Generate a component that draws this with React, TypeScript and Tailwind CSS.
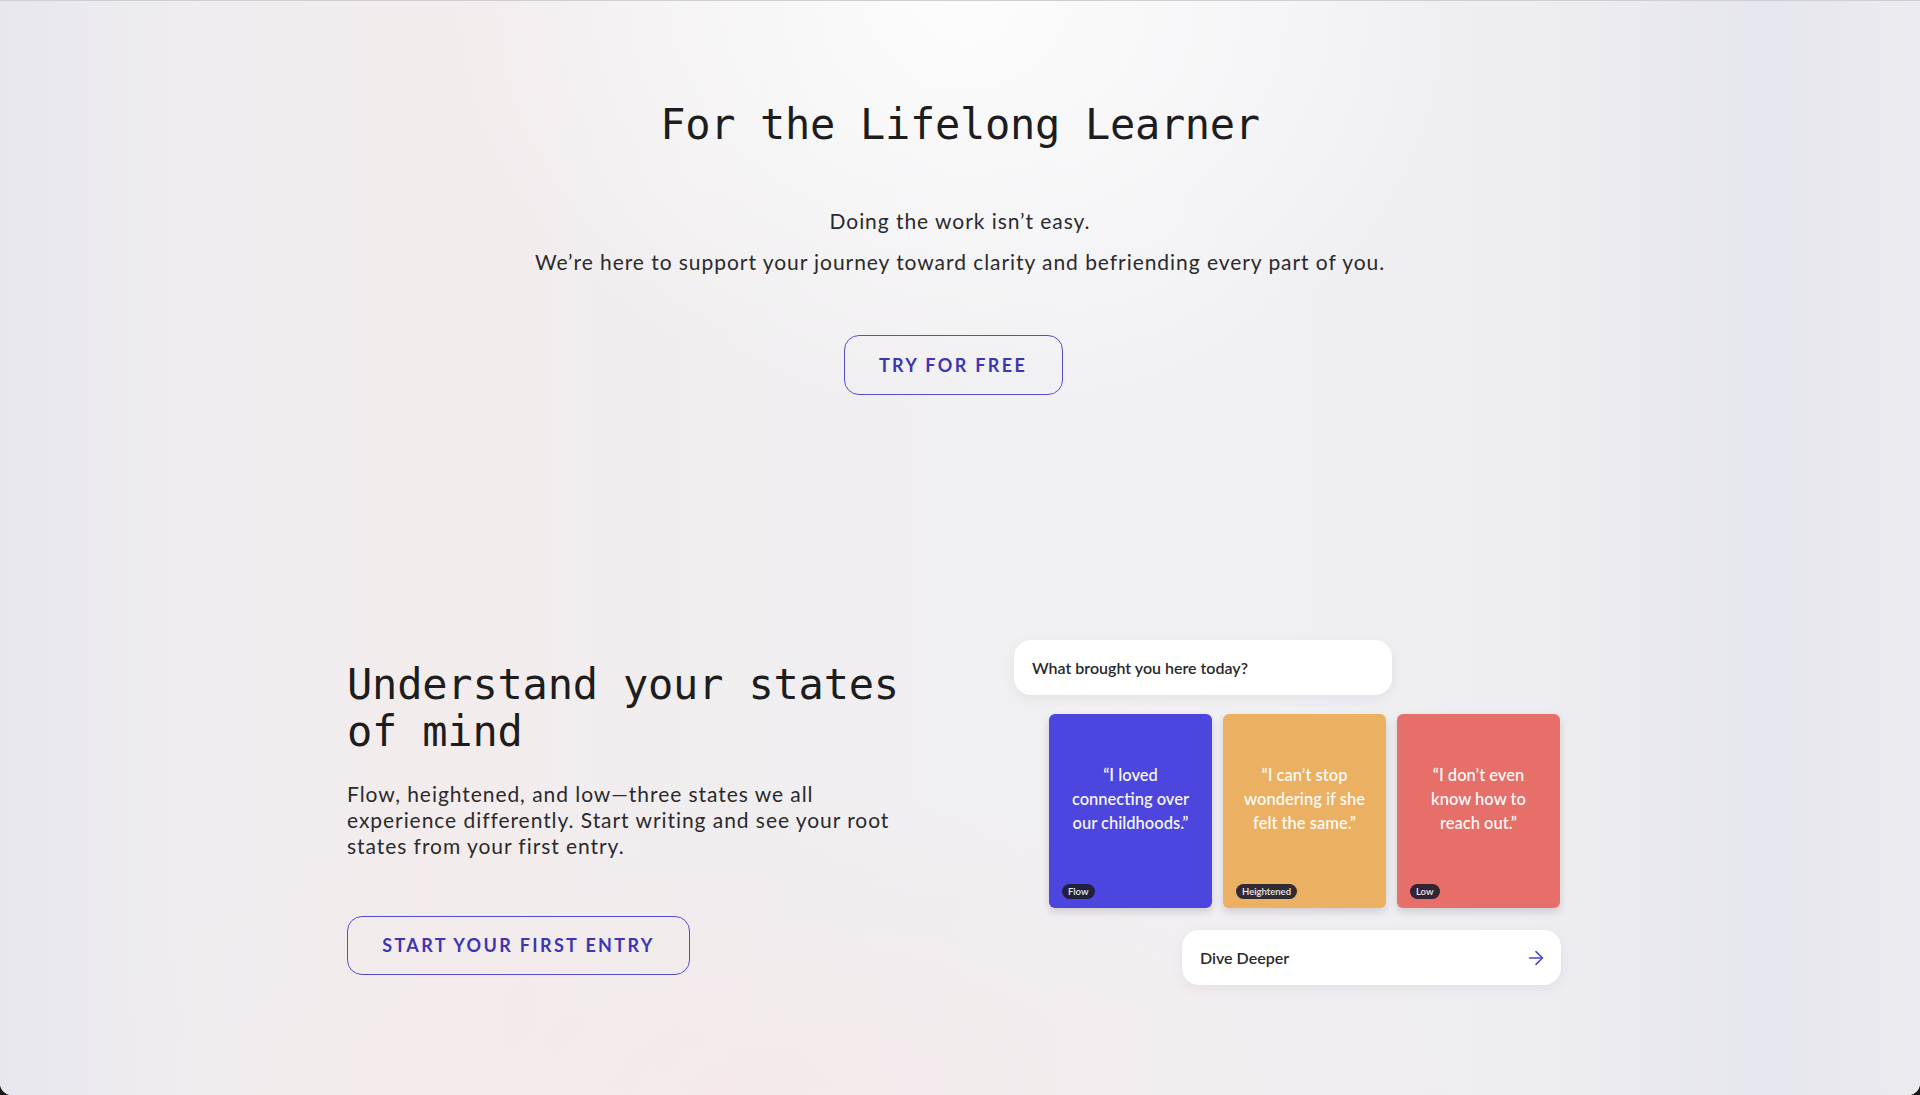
import { ArrowRight } from 'lucide-react'

const mono = "font-['DejaVu_Sans_Mono','Liberation_Mono',monospace]"
const sans = "font-['Lato','Open_Sans',sans-serif]"

const cards = [
  { quote: '“I loved connecting over our childhoods.”', tag: 'Flow', bg: 'bg-[#4c45de]' },
  { quote: '“I can’t stop wondering if she felt the same.”', tag: 'Heightened', bg: 'bg-[#ebb062]' },
  { quote: '“I don’t even know how to reach out.”', tag: 'Low', bg: 'bg-[#e66f69]' },
]

export default function App() {
  return (
    <div className="min-h-[1095px] bg-[#1a1a1c]">
      <div
        className={`relative min-h-[1095px] overflow-hidden rounded-b-[12px] border-t border-[#cfcfd3] bg-[#efeef1] ${sans}`}
      >
        <div className="pointer-events-none absolute inset-0 bg-[linear-gradient(90deg,#e8e7ee_0%,#efedf0_10%,#f3ecec_22%,#f0eef0_40%,#f1f0f3_60%,#eeedf1_80%,#e6e6ee_92%,#ecebf0_100%)]" />
        <div className="pointer-events-none absolute inset-0 bg-[radial-gradient(ellipse_520px_420px_at_50%_0%,rgba(255,255,255,0.85),rgba(255,255,255,0)_100%)]" />
        <div className="pointer-events-none absolute inset-0 bg-[radial-gradient(ellipse_700px_300px_at_40%_100%,rgba(245,232,232,0.7),rgba(245,232,232,0)_100%)]" />

        <div className="relative">
          <section className="flex flex-col items-center pt-[99px]">
            <h1 className={`${mono} text-[42px] leading-[50px] tracking-[-0.3px] text-[#1d1d20]`}>
              For the Lifelong Learner
            </h1>
            <p className="mt-[57px] text-[21px] leading-[28px] tracking-[0.045em] text-[#2a2a2d]">
              Doing the work isn’t easy.
            </p>
            <p className="mt-[13px] text-[21px] leading-[28px] tracking-[0.045em] text-[#2a2a2d]">
              We’re here to support your journey toward clarity and befriending every part of you.
            </p>
            <button className="mr-[14px] mt-[59px] flex h-[60px] w-[219px] items-center justify-center rounded-[15px] border-[1.5px] border-[#554dcc] text-[18px] font-bold tracking-[0.13em] text-[#3d36b3]">
              TRY FOR FREE
            </button>
          </section>

          <section className="ml-[347px] mt-[245px] flex items-center gap-[107px]">
            <div className="w-[560px] pt-[10px]">
              <h2 className={`${mono} text-[42px] leading-[47px] tracking-[-0.2px] text-[#1d1d20]`}>
                Understand your states of mind
              </h2>
              <p className="mt-[26px] text-[21px] leading-[26px] tracking-[0.045em] text-[#2a2a2d]">
                Flow, heightened, and low—three states we all experience differently. Start writing
                and see your root states from your first entry.
              </p>
              <button className="mt-[57px] flex h-[59px] w-[343px] items-center justify-center rounded-[15px] border-[1.5px] border-[#554dcc] text-[18px] font-bold tracking-[0.13em] text-[#3d36b3]">
                START YOUR FIRST ENTRY
              </button>
            </div>

            <div className="flex w-[547px] flex-col">
              <div className="flex h-[55px] w-[378px] items-center rounded-[17px] bg-white px-[18px] text-[16px] font-semibold text-[#2a2a2d] shadow-[0_4px_14px_rgba(0,0,0,0.06)]">
                What brought you here today?
              </div>
              <div className="ml-[35px] mt-[19px] flex gap-[11px]">
                {cards.map((c) => (
                  <div
                    key={c.tag}
                    className={`relative flex h-[194px] w-[163px] items-center justify-center rounded-[6px] px-[16px] pb-[24px] ${c.bg} shadow-[0_4px_8px_rgba(0,0,0,0.14)]`}
                  >
                    <p className="text-center text-[16.5px] font-semibold leading-[24px] text-white/95">
                      {c.quote}
                    </p>
                    <span className="absolute bottom-[9px] left-[13px] rounded-full bg-[#1e1c2e]/90 px-[6px] py-[2px] text-[9.5px] font-semibold leading-[11px] text-white/90">
                      {c.tag}
                    </span>
                  </div>
                ))}
              </div>
              <div className="ml-auto mt-[22px] flex h-[55px] w-[379px] items-center justify-between rounded-[17px] bg-white pl-[18px] pr-[14px] text-[16px] font-semibold text-[#2a2a2d] shadow-[0_4px_14px_rgba(0,0,0,0.06)]">
                Dive Deeper
                <ArrowRight className="h-[22px] w-[22px] text-[#4d46c8]" strokeWidth={1.75} />
              </div>
            </div>
          </section>
        </div>
      </div>
    </div>
  )
}
